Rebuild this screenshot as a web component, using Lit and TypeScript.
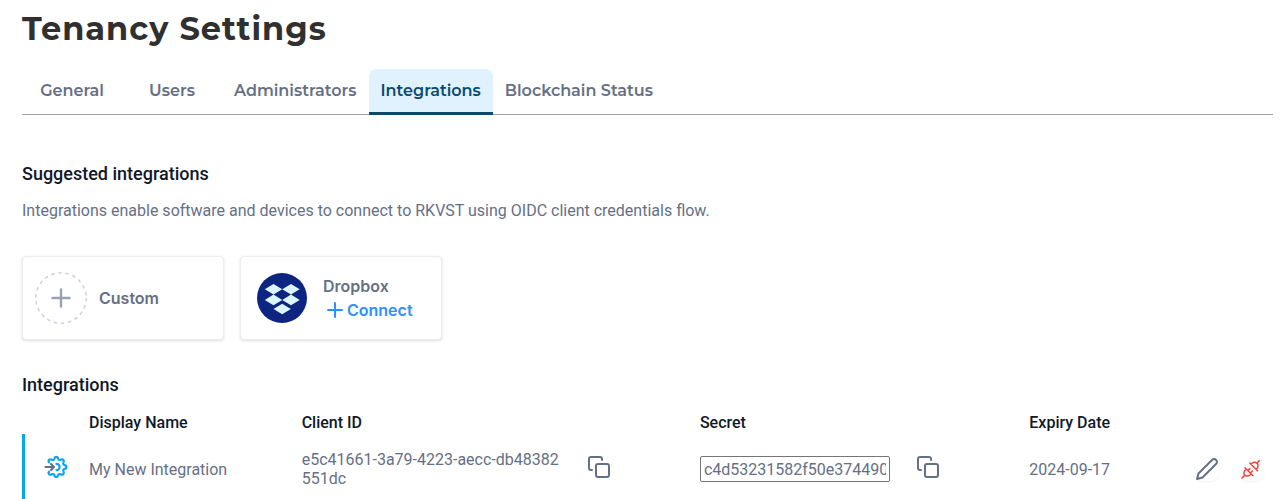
import { LitElement, html, css, svg } from "lit";
import { customElement, property, state } from "lit/decorators.js";
import { classMap } from "lit/directives/class-map.js";

const copyIcon = svg`<svg width="24" height="24" viewBox="0 0 24 24" fill="none" stroke="currentColor" stroke-width="2" stroke-linecap="round" stroke-linejoin="round" aria-hidden="true">
  <rect x="9" y="9" width="13" height="13" rx="2"/>
  <path d="M5 15H4a2 2 0 0 1-2-2V4a2 2 0 0 1 2-2h9a2 2 0 0 1 2 2v1"/>
</svg>`;

const editIcon = svg`<svg width="24" height="24" viewBox="0 0 24 24" fill="none" stroke="currentColor" stroke-width="2" stroke-linecap="round" stroke-linejoin="round" aria-hidden="true">
  <path d="M17 3a2.83 2.83 0 1 1 4 4L7.5 20.5 2 22l1.500-5.500z"/>
</svg>`;

const unplugIcon = svg`<svg width="24" height="24" viewBox="0 0 24 24" fill="none" stroke="currentColor" stroke-width="1.500" stroke-linecap="round" stroke-linejoin="round" aria-hidden="true">
  <path d="M2 21l2.600-2.600M5 10.800l7.700 7.700M6.200 12c-2.300 1.700-3 4.500-1.500 6.100s4.500 1.200 6.500-1M8 13.600l2-2M10.400 16l2-2M19.500 3.500l-2.600 2.600M9.800 6l7.700 7.700M11 7.200c1.800-2.300 4.400-2.700 6-1.100s1.200 4.300-.8 6.200"/>
</svg>`;

const gearIcon = svg`<svg width="24" height="24" viewBox="0 0 24 24" fill="none" stroke-width="2" stroke-linecap="round" stroke-linejoin="round" aria-hidden="true">
  <path stroke="#0ba5ec" stroke-width="2.200" d="M5 7.300C4.200 6.300 4.400 5.200 5.200 4.700c.9-.7 2-.4 2.900.1 1.200.5 2.100-.1 2.300-1.100.2-1.200.8-1.800 1.800-1.800s1.700.6 1.900 1.800c.2 1 1.100 1.600 2.300 1.100 1-.5 2-.8 2.900.1s.6 1.900.1 2.900c-.5 1.200.1 2 1.200 2.300 1.200.2 1.800.9 1.800 1.900s-.6 1.700-1.800 1.900c-1.100.2-1.700 1.100-1.200 2.300.5 1 .8 2-.1 2.900s-1.900.6-2.900.1c-1.200-.5-2.100.1-2.300 1.200-.2 1.200-.9 1.700-1.900 1.700s-1.600-.5-1.800-1.700c-.2-1.100-1.100-1.700-2.300-1.200-.9.500-2 .8-2.900.1-.8-.5-1-1.600-.2-2.600M12.500 8.900a3.100 3.100 0 0 1 0 6.200"/>
  <path stroke="#667085" stroke-width="2.200" d="M1.500 12H10M7 9l3 3-3 3"/>
</svg>`;

const dropboxLogo = svg`<svg width="50" height="50" viewBox="0 0 50 50" aria-hidden="true">
  <circle cx="25" cy="25" r="25" fill="#0d2481"/>
  <path fill="#dcf6ff" d="M16.500 11l8.700 5.300-8.700 5.300-8.700-5.300zM34 11l8.700 5.300-8.700 5.300-8.800-5.300zM16.500 21.600l8.700 5.300-8.700 5.300-8.700-5.300zM34 21.600l8.700 5.300-8.700 5.300-8.800-5.300zM25.200 30.700l8.700 5.200-8.700 5.300-8.700-5.300z"/>
</svg>`;

const customIcon = svg`<svg width="52" height="52" viewBox="0 0 52 52" fill="none" stroke-linecap="round" aria-hidden="true">
  <circle cx="26" cy="26" r="25.200" stroke="#d0d2df" stroke-width="1.600" stroke-dasharray="3.500 3.700" stroke-linecap="butt"/>
  <path stroke="#98a2b3" stroke-width="2.400" d="M26 17.500v17M17.500 26h17"/>
</svg>`;

const plusIcon = svg`<svg width="16" height="16" viewBox="0 0 16 16" fill="none" stroke="currentColor" stroke-width="2" stroke-linecap="round" aria-hidden="true"><path d="M8 1v14M1 8h14"/></svg>`;

interface Integration {
  name: string;
  clientId: string;
  secret: string;
  expiry: string;
}

@customElement("tab-bar")
export class TabBar extends LitElement {
  @property({ attribute: false }) tabs: string[] = [];
  @state() private selected = "Integrations";

  static styles = css`
    :host {
      display: block;
      border-bottom: 1px solid #a3a3a3;
    }
    .tabs {
      display: flex;
      margin-bottom: -1px;
    }
    .tab {
      min-width: 100px;
      height: 46px;
      padding: 0 12px;
      border: 0;
      border-bottom: 3px solid transparent;
      border-radius: 8px 8px 0 0;
      background: none;
      color: #667085;
      font: 600 16px/20px Montserrat, Inter, sans-serif;
      white-space: nowrap;
      cursor: pointer;
    }
    .selected {
      background: #e0f2fe;
      box-shadow: inset 0 -3px #0b4a6f;
      border-bottom: 0;
      padding-bottom: 3px;
      color: #0b4a6f;
    }
  `;

  render() {
    return html`<div class="tabs" role="tablist">
      ${this.tabs.map(
        (t) => html`<button
          role="tab"
          class=${classMap({ tab: true, selected: t === this.selected })}
          aria-selected=${t === this.selected}
          @click=${() => (this.selected = t)}
        >${t}</button>`
      )}
    </div>`;
  }
}

@customElement("integrations-table")
export class IntegrationsTable extends LitElement {
  @property({ attribute: false }) rows: Integration[] = [];

  static styles = css`
    :host {
      display: block;
    }
    table {
      width: 100%;
      table-layout: fixed;
      border-collapse: separate;
      border-spacing: 0;
    }
    .c-type { width: 67px; }
    .c-name { width: 17%; }
    .c-client { width: 22.8%; }
    .c-copy { width: 113px; }
    .c-secret { width: 17.3%; }
    .c-edit { width: 45px; }
    .c-remove { width: 33px; }
    th {
      padding: 0 0 2px;
      text-align: left;
      font-weight: 500;
      line-height: 19px;
      color: #101828;
    }
    td {
      height: 38px;
      padding: 16px 0 11px;
      color: #667085;
      line-height: 19px;
      vertical-align: middle;
    }
    .type {
      border-left: 3px solid #0ba5ec;
      padding-left: 19px;
    }
    .client {
      padding-right: 24px;
      word-break: break-all;
    }
    svg {
      display: block;
    }
    input {
      box-sizing: border-box;
      display: block;
      width: 190px;
      max-width: 100%;
      height: 26px;
      padding: 1px 3px;
      border: 1px solid #767676;
      border-radius: 2px;
      background: #fff;
      color: #667085;
      font: 400 16px/19px Roboto, sans-serif;
    }
    button {
      display: block;
      padding: 0;
      margin-bottom: 4px;
      border: 0;
      background: none;
      color: #667085;
      cursor: pointer;
    }
    .action {
      margin-bottom: 0;
      border-radius: 8px;
      box-shadow: 0 1px 2px rgba(16, 24, 40, 0.05);
    }
    .danger {
      color: #f04438;
    }
    .type svg {
      margin-bottom: 4px;
    }
  `;

  private copy(text: string) {
    navigator.clipboard?.writeText(text);
  }

  render() {
    return html`<table>
      <colgroup>
        <col class="c-type" /><col class="c-name" /><col class="c-client" /><col class="c-copy" />
        <col class="c-secret" /><col class="c-copy" /><col /><col class="c-edit" /><col class="c-remove" />
      </colgroup>
      <thead>
        <tr>
          <th></th>
          <th scope="col">Display Name</th>
          <th scope="col">Client ID</th>
          <th></th>
          <th scope="col" id="secret">Secret</th>
          <th></th>
          <th scope="col">Expiry Date</th>
          <th></th>
          <th></th>
        </tr>
      </thead>
      <tbody>
        ${this.rows.map(
          (r) => html`<tr>
            <td class="type">${gearIcon}</td>
            <td>${r.name}</td>
            <td class="client">${r.clientId}</td>
            <td><button aria-label="Copy client ID" @click=${() => this.copy(r.clientId)}>${copyIcon}</button></td>
            <td><input aria-labelledby="secret" readonly .value=${r.secret} /></td>
            <td><button aria-label="Copy secret" @click=${() => this.copy(r.secret)}>${copyIcon}</button></td>
            <td>${r.expiry}</td>
            <td><button class="action" aria-label="Edit">${editIcon}</button></td>
            <td><button class="action danger" aria-label="Disconnect">${unplugIcon}</button></td>
          </tr>`
        )}
      </tbody>
    </table>`;
  }
}

@customElement("app-root")
export class AppRoot extends LitElement {
  private tabs = ["General", "Users", "Administrators", "Integrations", "Blockchain Status"];
  private rows: Integration[] = [
    {
      name: "My New Integration",
      clientId: "e5c41661-3a79-4223-aecc-db48382551dc",
      secret: "c4d53231582f50e374490",
      expiry: "2024-09-17",
    },
  ];

  static styles = css`
    :host {
      display: block;
      padding: 9px 8px 0 22px;
      background: #fff;
      color: #101828;
      font: 400 16px/20px Roboto, sans-serif;
    }
    h1 {
      margin: 0 0 20px;
      color: #303030;
      font: 700 32px/40px Montserrat, Inter, sans-serif;
      letter-spacing: 1px;
    }
    h2 {
      margin: 0;
      font: 500 18px/24px Roboto, sans-serif;
    }
    .suggested {
      margin-top: 47px;
    }
    .intro {
      margin: 15px 0 35px;
      color: #667085;
    }
    .cards {
      display: flex;
      flex-wrap: wrap;
      gap: 16px;
      margin-bottom: 33px;
    }
    .card {
      box-sizing: border-box;
      display: flex;
      align-items: center;
      gap: 12px;
      width: 202px;
      height: 84px;
      padding: 0 12px;
      border: 1px solid #eaecf0;
      border-radius: 4px;
      background: #fff;
      box-shadow: 0 1px 3px rgba(16, 24, 40, 0.14);
      color: #667085;
      font: 600 16px/24px Inter, sans-serif;
      text-align: left;
    }
    .brand {
      gap: 16px;
      padding: 0 16px;
    }
    .connect {
      display: flex;
      align-items: center;
      gap: 4px;
      padding: 0 0 0 4px;
      border: 0;
      background: none;
      color: #2e90fa;
      font: inherit;
      cursor: pointer;
    }
    svg {
      display: block;
      flex: none;
    }
    .list {
      margin-bottom: 16px;
    }
  `;

  render() {
    return html`
      <h1>Tenancy Settings</h1>
      <tab-bar .tabs=${this.tabs}></tab-bar>
      <h2 class="suggested">Suggested integrations</h2>
      <p class="intro">Integrations enable software and devices to connect to RKVST using OIDC client credentials flow.</p>
      <div class="cards">
        <button class="card">${customIcon}<span>Custom</span></button>
        <div class="card brand">
          ${dropboxLogo}
          <div>
            <div>Dropbox</div>
            <button class="connect">${plusIcon}Connect</button>
          </div>
        </div>
      </div>
      <h2 class="list">Integrations</h2>
      <integrations-table .rows=${this.rows}></integrations-table>
    `;
  }
}
